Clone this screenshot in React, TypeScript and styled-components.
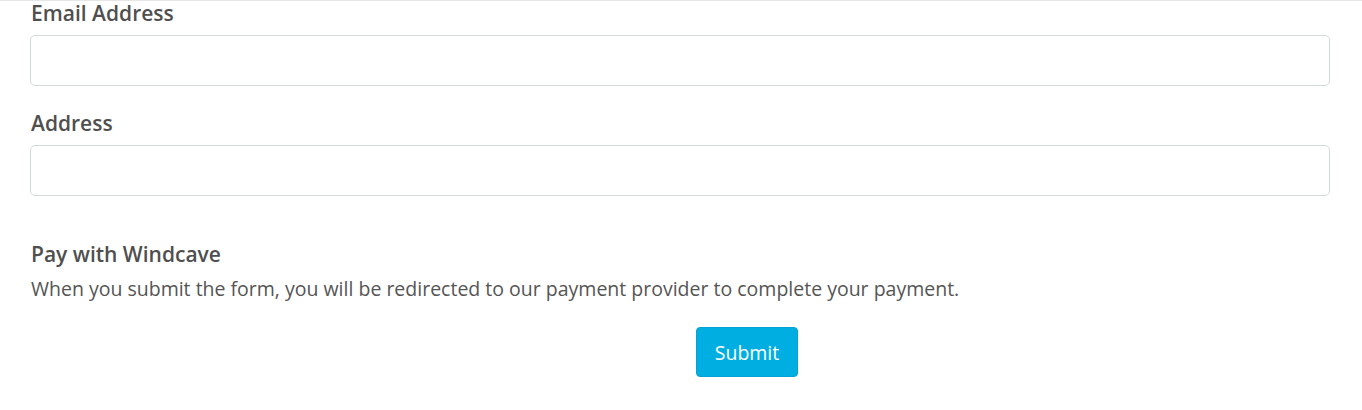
import React from "react";
import styled, { createGlobalStyle } from "styled-components";

const GlobalStyle = createGlobalStyle`
  html, body {
    margin: 0;
    padding: 0;
    background: #ffffff;
  }

  body {
    font-family: "Open Sans", "Noto Sans", Arial, sans-serif;
    color: #555555;
  }
`

const Page = styled.div`
  border-top: 1px solid #e6e6e6;
  padding: 0 32px 0 30px;
`

const Field = styled.div`
  display: flex;
  flex-direction: column;
  margin-bottom: 25px;
`

const Label = styled.label`
  font-size: 21px;
  font-weight: 600;
  line-height: 24px;
  margin: 0 0 10px 1px;
  color: #4f4f4f;
`

const Input = styled.input`
  box-sizing: border-box;
  height: 51px;
  width: 100%;
  border: 1px solid #d3dadb;
  border-radius: 5px;
  padding: 6px 12px;
  font-family: inherit;
  font-size: 18px;
  outline: none;
`

const Section = styled.div`
  margin-top: 46px;
  display: flex;
  flex-direction: column;
`

const SectionTitle = styled.h3`
  margin: 0 0 9px 1px;
  font-size: 21px;
  font-weight: 600;
  line-height: 24px;
  color: #4f4f4f;
`

const Note = styled.p`
  margin: 0 0 0 1px;
  font-size: 19.5px;
  line-height: 28px;
  color: #555555;
`

const Actions = styled.div`
  display: flex;
  justify-content: center;
  margin-top: 24px;
  padding-left: 134px;
`

const SubmitButton = styled.button`
  height: 50px;
  width: 102px;
  padding: 0;
  border: 1px solid #05a3d3;
  border-radius: 4px;
  background: #00aee2;
  color: #ffffff;
  font-family: inherit;
  font-size: 19.5px;
  cursor: pointer;
`

const App: React.FC = () => {
  return (
    <>
      <GlobalStyle />
      <Page>
        <Field>
          <Label htmlFor="email">Email Address</Label>
          <Input id="email" type="email" />
        </Field>
        <Field>
          <Label htmlFor="address">Address</Label>
          <Input id="address" type="text" />
        </Field>
        <Section>
          <SectionTitle>Pay with Windcave</SectionTitle>
          <Note>When you submit the form, you will be redirected to our payment provider to complete your payment.</Note>
        </Section>
        <Actions>
          <SubmitButton type="submit">Submit</SubmitButton>
        </Actions>
      </Page>
    </>
  )
}

export default App
